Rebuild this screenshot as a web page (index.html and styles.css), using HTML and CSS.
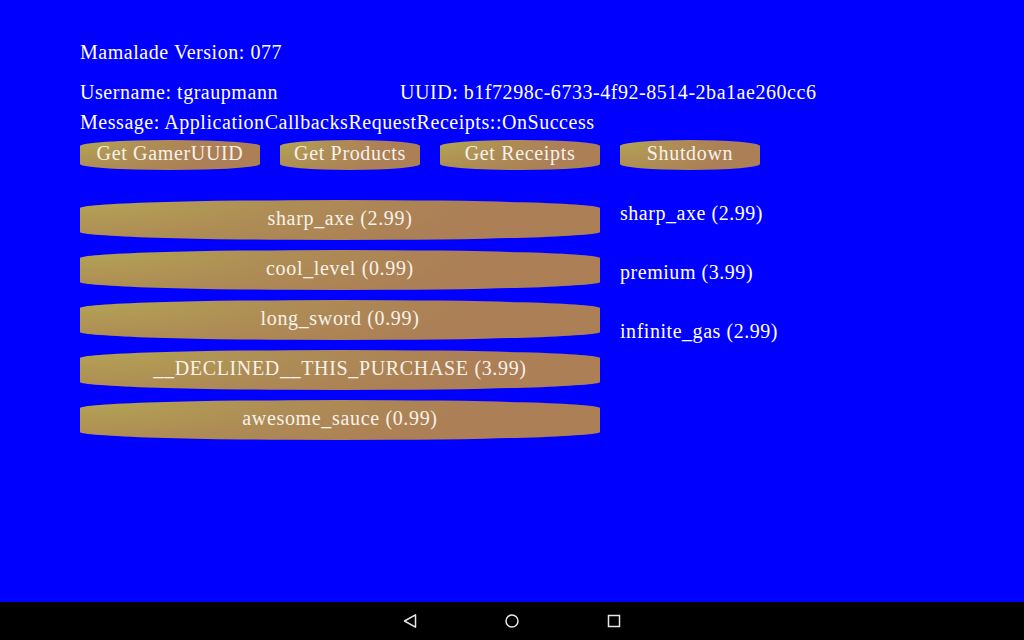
FILE: index.html
```html
<!DOCTYPE html>
<html>
<head>
<meta charset="utf-8">
<link rel="stylesheet" href="styles.css">
</head>
<body>
<div class="screen">
  <main class="app">
    <div class="line version">Mamalade Version: 077</div>
    <div class="info">
      <div class="line user">Username: tgraupmann</div>
      <div class="line uuid">UUID: b1f7298c-6733-4f92-8514-2ba1ae260cc6</div>
    </div>
    <div class="line message">Message: ApplicationCallbacksRequestReceipts::OnSuccess</div>
    <div class="actions">
      <button class="btn small w180">Get GamerUUID</button>
      <button class="btn small w140">Get Products</button>
      <button class="btn small w160">Get Receipts</button>
      <button class="btn small w140">Shutdown</button>
    </div>
    <div class="content">
      <div class="products">
        <button class="btn big">sharp_axe (2.99)</button>
        <button class="btn big">cool_level (0.99)</button>
        <button class="btn big">long_sword (0.99)</button>
        <button class="btn big">__DECLINED__THIS_PURCHASE (3.99)</button>
        <button class="btn big">awesome_sauce (0.99)</button>
      </div>
      <div class="receipts">
        <div class="line">sharp_axe (2.99)</div>
        <div class="line">premium (3.99)</div>
        <div class="line">infinite_gas (2.99)</div>
      </div>
    </div>
  </main>
  <nav class="navbar">
    <svg class="nav-icon" width="16" height="16" viewBox="0 0 16 16"><path d="M13.5 1.8 L2.5 8 L13.5 14.2 Z" fill="none" stroke="#e6e6e6" stroke-width="1.5" stroke-linejoin="round"/></svg>
    <svg class="nav-icon" width="16" height="16" viewBox="0 0 16 16"><circle cx="8" cy="8" r="6" fill="none" stroke="#e6e6e6" stroke-width="1.5"/></svg>
    <svg class="nav-icon" width="16" height="16" viewBox="0 0 16 16"><rect x="2.5" y="2.5" width="11" height="11" fill="none" stroke="#e6e6e6" stroke-width="1.5"/></svg>
  </nav>
</div>
</body>
</html>
```
FILE: styles.css
```css
html, body {
  margin: 0;
  padding: 0;
}
body {
  width: 1024px;
  height: 640px;
  overflow: hidden;
  font-family: "Liberation Serif", "Times New Roman", serif;
  font-size: 20px;
  letter-spacing: 0.54px;
  color: #ffffff;
}
.screen {
  display: flex;
  flex-direction: column;
  height: 640px;
}
.app {
  height: 602px;
  box-sizing: border-box;
  background: #0000ff;
  padding: 40px 0 0 80px;
  display: flex;
  flex-direction: column;
}
.line {
  line-height: 24px;
  white-space: nowrap;
}
.info {
  display: flex;
  margin-top: 16px;
}
.user {
  width: 320px;
}
.message {
  margin-top: 6px;
}
.actions {
  display: flex;
  gap: 20px;
  margin-top: 6px;
}
.btn {
  border: none;
  margin: 0;
  font-family: inherit;
  font-size: 20px;
  letter-spacing: 0.66px;
  color: #f7f2ea;
  background-color: #ac7f56;
  background-image: radial-gradient(ellipse 75% 170% at 0% 0%, #b3a454 0%, #ae8c55 55%, #ac7f56 100%);
  text-align: center;
  white-space: nowrap;
  padding: 0 0 4px 0;
}
.small {
  height: 30px;
  line-height: 26px;
  border-radius: 50% / 6px;
}
.w180 { width: 180px; }
.w160 { width: 160px; }
.w140 { width: 140px; }
.content {
  display: flex;
  gap: 20px;
  margin-top: 30px;
}
.products {
  width: 520px;
  display: flex;
  flex-direction: column;
  gap: 10px;
}
.big {
  width: 520px;
  height: 40px;
  line-height: 36px;
  border-radius: 50% / 8px;
}
.receipts {
  display: flex;
  flex-direction: column;
  gap: 35px;
  padding-top: 1px;
}
.navbar {
  height: 38px;
  background: #000000;
  display: flex;
  justify-content: center;
  align-items: center;
  gap: 86px;
}
.nav-icon {
  display: block;
}
```
